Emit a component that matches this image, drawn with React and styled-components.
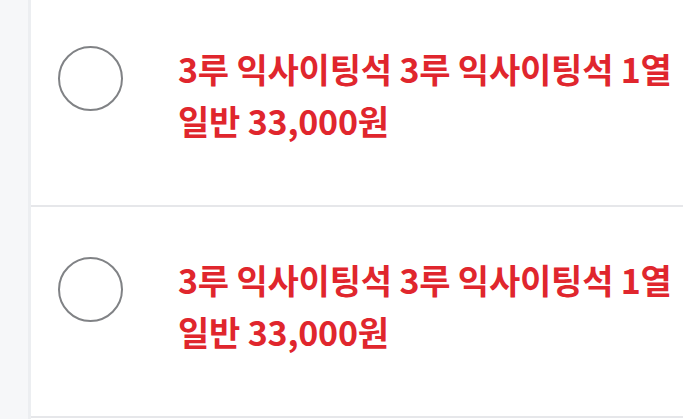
import React from "react";
import styled, { createGlobalStyle } from "styled-components";

const GlobalStyle = createGlobalStyle`
  html, body {
    margin: 0;
    padding: 0;
    background: #f6f7f9;
    overflow: hidden;
  }
  body {
    font-family: "Noto Sans CJK KR", "Noto Sans", sans-serif;
  }
`;

const Page = styled.div`
  display: flex;
  height: 419px;
  overflow: hidden;
`;

const Side = styled.div`
  width: 28px;
  flex-shrink: 0;
  background: #f6f7f9;
`;

const List = styled.ul`
  flex: 1;
  margin: -4px 0 0;
  padding: 0;
  list-style: none;
  background: #fff;
  border-left: 3px solid #eceef1;
  min-width: 0;
`;

const Row = styled.li`
  display: flex;
  align-items: flex-start;
  height: 209px;
  padding-left: 27px;
  border-bottom: 2px solid #e6e7ea;
  white-space: nowrap;
  overflow: hidden;
`;

const Radio = styled.span`
  width: 61px;
  height: 61px;
  margin-top: 50px;
  flex-shrink: 0;
  border: 2.5px solid #808285;
  border-radius: 50%;
  background: #fff;
`;

const Label = styled.div`
  margin-left: 55px;
  margin-top: 47px;
  color: #e0262d;
  font-size: 34px;
  font-weight: 700;
  line-height: 52px;
  letter-spacing: -0.2px;
`;

const seats = [
  { id: 1, name: "3루 익사이팅석 3루 익사이팅석 1열", price: "일반 33,000원" },
  { id: 2, name: "3루 익사이팅석 3루 익사이팅석 1열", price: "일반 33,000원" },
];

export default function App() {
  return (
    <Page>
      <GlobalStyle />
      <Side />
      <List>
        {seats.map((s) => (
          <Row key={s.id}>
            <Radio />
            <Label>
              {s.name}
              <br />
              {s.price}
            </Label>
          </Row>
        ))}
      </List>
    </Page>
  );
}
